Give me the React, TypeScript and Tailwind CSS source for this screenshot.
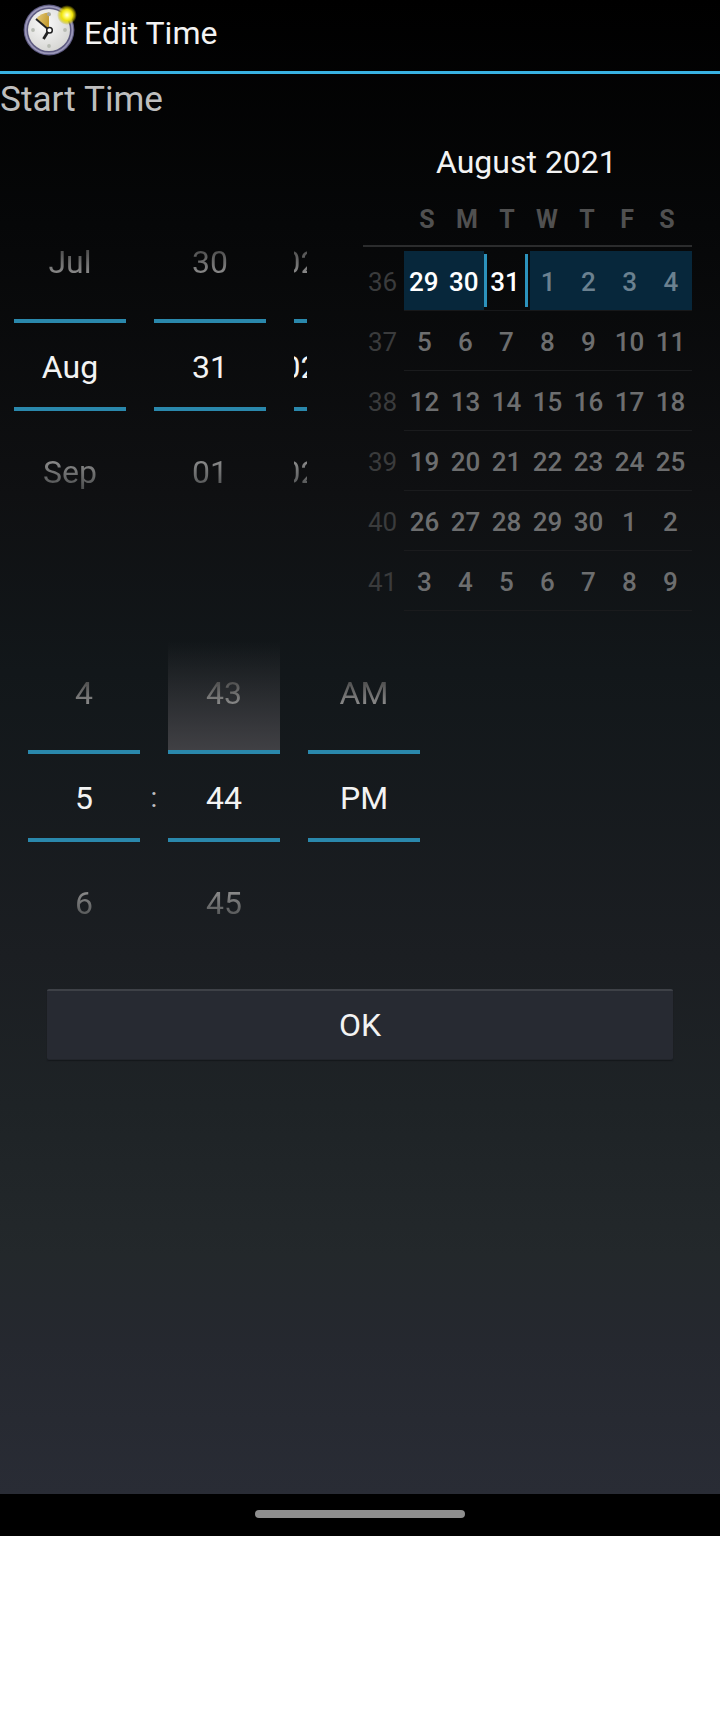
type PickerProps = { values: string[]; pressed?: boolean; narrow?: boolean };

function Picker({ values, pressed, narrow }: PickerProps) {
  const [before, current, after] = values;
  return (
    <div
      className={`flex flex-col overflow-hidden text-[32px] leading-[40px] ${narrow ? "w-[13px]" : "w-[112px]"}`}
    >
      <div className={`flex h-[114px] items-center justify-center ${pressed ? "bg-linear-to-b/srgb from-transparent from-5% to-[#404044]" : ""}`}>
        <span className="bg-linear-to-b/srgb from-[#484848] from-15% to-[#909090] to-85% bg-clip-text whitespace-nowrap text-transparent">
          {before}
        </span>
      </div>
      <div className="h-1 shrink-0 bg-[#2a88ac]" />
      <div className="flex h-[84px] items-center justify-center pt-1">
        <span className="whitespace-nowrap text-[#f3f3f3]">{current}</span>
      </div>
      <div className="h-1 shrink-0 bg-[#2a88ac]" />
      <div className="flex h-[122px] items-center justify-center">
        <span className="bg-linear-to-b/srgb from-[#909090] from-15% to-[#4a4c4d] to-95% bg-clip-text whitespace-nowrap text-transparent">
          {after}
        </span>
      </div>
    </div>
  );
}

function ClockIcon() {
  return (
    <svg width="58" height="58" viewBox="0 0 58 58" className="block">
      <defs>
        <radialGradient id="face" cx="0.4" cy="0.35" r="0.7">
          <stop offset="0" stopColor="#fafafa" />
          <stop offset="1" stopColor="#d5d5d2" />
        </radialGradient>
        <radialGradient id="sun">
          <stop offset="0" stopColor="#fffff0" />
          <stop offset="0.25" stopColor="#fffb70" />
          <stop offset="0.55" stopColor="#f0e40c" />
          <stop offset="0.78" stopColor="#d8cb00" stopOpacity="0.6" />
          <stop offset="1" stopColor="#a89c00" stopOpacity="0" />
        </radialGradient>
        <linearGradient id="slice" x1="0" y1="0" x2="1" y2="0.4">
          <stop offset="0" stopColor="#e6cd80" />
          <stop offset="1" stopColor="#c59d32" />
        </linearGradient>
      </defs>
      <circle cx="27" cy="30" r="25.4" fill="#5d5a80" />
      <circle cx="27" cy="30" r="23.4" fill="none" stroke="#9a97b8" strokeWidth="1.8" />
      <circle cx="27" cy="30" r="21" fill="url(#face)" />
      <path d="M27 30 L14 19 A17.5 17.5 0 0 1 27 12.5 Z" fill="url(#slice)" />
      <circle cx="27" cy="14.2" r="2" fill="#a9aaa0" />
      <circle cx="43" cy="30" r="1.9" fill="#b8bcb4" />
      <circle cx="27" cy="46" r="1.9" fill="#b8bcb4" />
      <circle cx="11" cy="30" r="1.9" fill="#b8bcb4" />
      <path d="M27 30 L14 19" stroke="#222" strokeWidth="1.9" />
      <path d="M27 30 L21.5 39" stroke="#222" strokeWidth="2.8" />
      <circle cx="27.5" cy="30.3" r="2.8" fill="#fff" stroke="#222" strokeWidth="1.5" />
      <circle cx="45" cy="15" r="10" fill="url(#sun)" />
    </svg>
  );
}

const weekdays = ["S", "M", "T", "W", "T", "F", "S"];

const weeks = [
  { week: 37, days: [5, 6, 7, 8, 9, 10, 11] },
  { week: 38, days: [12, 13, 14, 15, 16, 17, 18] },
  { week: 39, days: [19, 20, 21, 22, 23, 24, 25] },
  { week: 40, days: [26, 27, 28, 29, 30, 1, 2] },
  { week: 41, days: [3, 4, 5, 6, 7, 8, 9] },
];

function Calendar() {
  return (
    <div className="w-[329px]">
      <div className="pt-[14px] pl-[73px] text-[32px] leading-[38px] text-[#f3f3f3]">August 2021</div>
      <div className="mt-[21px] ml-[44px] grid h-[43px] w-[280px] grid-cols-7 text-center text-[25px] leading-[36px] font-bold text-[#505050]">
        {weekdays.map((d, i) => (
          <span key={i}>{d}</span>
        ))}
      </div>
      <div className="mb-1 h-[2px] bg-[#2b2c2d]" />
      <div className="flex h-[60px] text-[26px] leading-[62px]">
        <div className="w-[41px] pr-[2px] text-center text-[#3a3b3c]">36</div>
        <div className="flex flex-1 border-b border-[#17181a] font-medium">
          <div className="flex w-[80px] bg-[#07273b] text-white">
            <span className="w-[40px] text-center">29</span>
            <span className="w-[41px] text-center">30</span>
          </div>
          <div className="my-[3px] w-[44px] border-x-[3px] border-[#2c92bc] pr-[2px] text-center leading-[56px] text-white">31</div>
          <div className="ml-[2px] grid flex-1 grid-cols-4 bg-[#07273b] pr-[1px] text-center text-[#6b8190]">
            <span className="-ml-1">1</span>
            <span className="-ml-1">2</span>
            <span className="-ml-0.5">3</span>
            <span>4</span>
          </div>
        </div>
      </div>
      {weeks.map(({ week, days }) => (
        <div key={week} className="flex h-[60px] text-[26px] leading-[62px]">
          <div className="w-[41px] pr-[2px] text-center text-[#3a3b3c]">{week}</div>
          <div className="grid flex-1 grid-cols-7 border-b border-[#1a1b1d] pr-[1px] text-center font-medium text-[#6d6e6f]">
            {days.map((d) => (
              <span key={d}>{d}</span>
            ))}
          </div>
        </div>
      ))}
    </div>
  );
}

export default function App() {
  return (
    <div className="h-[1712px] w-[720px] overflow-hidden bg-white font-[Roboto,sans-serif]">
      <div className="flex h-[1494px] flex-col bg-[linear-gradient(to_bottom,#000_0%,#060708_15%,#0f1012_33%,#12171a_45%,#1b1e22_64%,#1e2326_74%,#23282b_84%,#25282f_90%,#292c35_100%)]">
        <header className="flex h-[74px] shrink-0 border-b-[3px] border-[#38b2e2]">
          <div className="ml-[22px] w-[62px]">
            <ClockIcon />
          </div>
          <h1 className="pt-[14px] text-[32px] leading-[38px] text-[#f3f3f3]">Edit Time</h1>
        </header>
        <h2 className="h-[55px] shrink-0 pt-[3px] text-[35.2px] leading-[44px] text-[#bebebe]">Start Time</h2>
        <div className="flex h-[507px] shrink-0">
          <div className="flex w-[363px] gap-7 pt-[76px] pl-[14px]">
            <Picker values={["Jul", "Aug", "Sep"]} />
            <Picker values={["30", "31", "01"]} />
            <Picker narrow values={["2020", "2021", "2022"]} />
          </div>
          <Calendar />
        </div>
        <div className="flex h-[353px] shrink-0 pl-7">
          <Picker values={["4", "5", "6"]} />
          <div className="w-7 pt-[146px] text-center text-[28px] leading-[32px] text-[#bebebe]">:</div>
          <Picker pressed values={["43", "44", "45"]} />
          <div className="w-7" />
          <Picker values={["AM", "PM", ""]} />
        </div>
        <button className="mx-[47px] h-[71px] shrink-0 rounded-[2px] border-t-2 border-b border-t-[#3e4147] border-b-[#22252b] bg-[#272a32] text-[32px] leading-[36px] text-[#f3f3f3] shadow-[0_1px_1px_#15181b]">
          OK
        </button>
      </div>
      <div className="flex h-[42px] justify-center bg-black pt-4">
        <div className="h-2 w-[210px] rounded-full bg-[#8e8e8e]" />
      </div>
    </div>
  );
}
